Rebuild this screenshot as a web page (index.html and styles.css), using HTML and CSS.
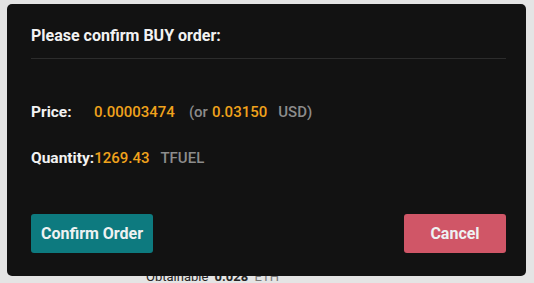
FILE: index.html
```html
<!DOCTYPE html>
<html lang="en">
<head>
    <meta charset="UTF-8">
    <title>Confirm Order</title>
    <link rel="stylesheet" href="styles.css">
</head>
<body>
    <div class="page-behind">
        <p class="obtainable">Obtainable <b>0.028</b> <span>ETH</span></p>
    </div>

    <div class="overlay">
        <div class="confirm-modal">
            <h1 class="modal-title">Please confirm BUY order:</h1>

            <div class="order-row price">
                <span class="label">Price:</span>
                <span class="value">0.00003474</span>
                <span class="muted">(or</span><span class="value">0.03150</span>
                <span class="muted unit">USD)</span>
            </div>

            <div class="order-row quantity">
                <span class="label">Quantity:</span><span class="value">1269.43</span>
                <span class="muted unit">TFUEL</span>
            </div>

            <div class="modal-actions">
                <button class="action-button confirm">Confirm Order</button>
                <button class="action-button cancel">Cancel</button>
            </div>
        </div>
    </div>
</body>
</html>
```

FILE: styles.css
```css
body, html {
    margin: 0;
    padding: 0;
    width: 100%;
    height: 100%;
    background: #e4e4e4;
    font-family: 'Roboto', sans-serif;
    overflow: hidden;
}

.page-behind {
    height: 100%;
    display: flex;
    align-items: flex-end;
}

.obtainable {
    margin: 0 0 0 146px;
    font-size: 13px;
    line-height: 13px;
    color: #222;
}

.obtainable b {
    margin: 0 3px;
}

.obtainable span {
    color: #777;
}

.overlay {
    position: absolute;
    inset: 0;
    padding: 4px 8px 0 7px;
}

.confirm-modal {
    width: 519px;
    height: 272px;
    box-sizing: border-box;
    padding: 22px 20px 0 24px;
    background: #121212;
    border-radius: 5px;
    display: flex;
    flex-direction: column;
}

.modal-title {
    margin: 0;
    padding-bottom: 12px;
    border-bottom: 1px solid #2c2c2c;
    font-size: 16px;
    line-height: 20px;
    font-weight: 700;
    color: #f2f2f2;
}

.order-row {
    display: flex;
    font-size: 15px;
    line-height: 20px;
    font-weight: 500;
}

.order-row.price {
    margin-top: 43px;
}

.order-row.quantity {
    margin-top: 26px;
}

.label {
    color: #f2f2f2;
    font-weight: 700;
    font-size: 15.5px;
}

.price .label {
    width: 63px;
}

.value {
    color: #f0a21c;
}

.muted {
    color: #8c8c8c;
}

.price .muted {
    margin-left: 14px;
    margin-right: 4px;
}

.muted.unit {
    margin-left: 11px;
}

.modal-actions {
    margin-top: 46px;
    display: flex;
    justify-content: space-between;
}

.action-button {
    height: 39px;
    border: none;
    border-radius: 3px;
    font-family: 'Roboto', sans-serif;
    font-weight: 700;
    font-size: 16px;
    color: #eef2f2;
    cursor: pointer;
}

.action-button.confirm {
    width: 122px;
    background: #0d7a7f;
}

.action-button.cancel {
    width: 102px;
    background: #d05667;
}
```
